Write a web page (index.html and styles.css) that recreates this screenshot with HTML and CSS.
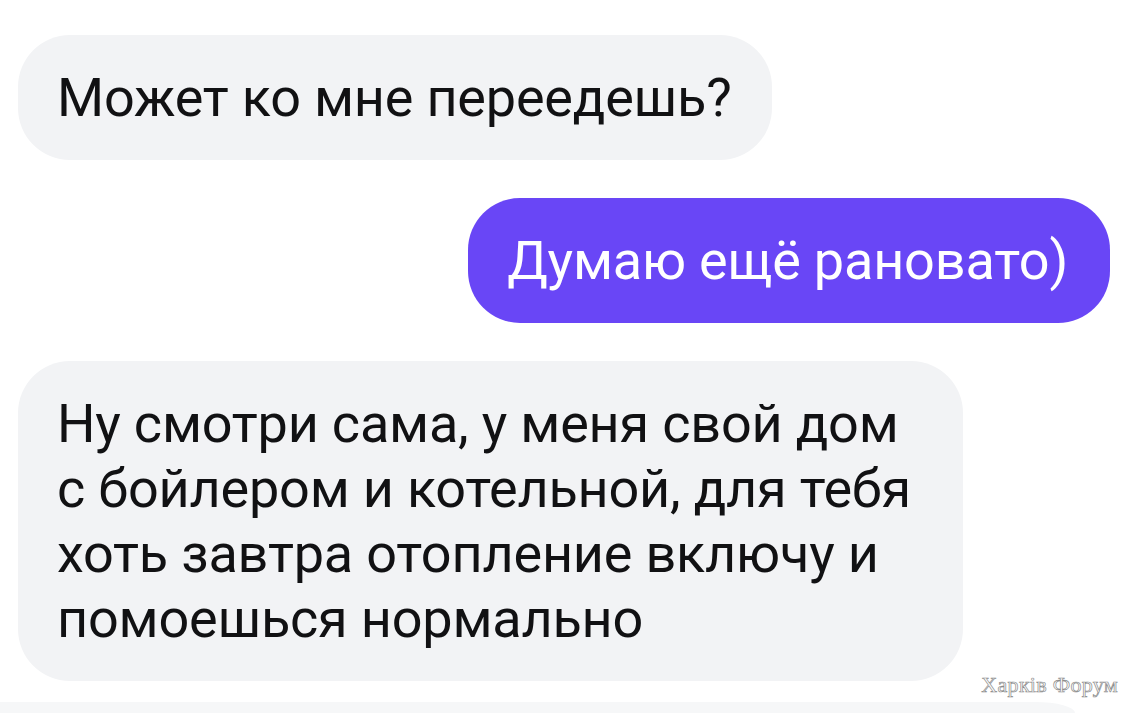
FILE: index.html
```html
<!DOCTYPE html>
<html lang="ru">
<head>
<meta charset="utf-8">
<link rel="stylesheet" href="styles.css">
</head>
<body>
<div class="chat">
  <div class="msg in">Может ко мне переедешь?</div>
  <div class="msg out">Думаю ещё рановато)</div>
  <div class="msg in long">Ну смотри сама, у меня свой дом<br>с бойлером и котельной, для тебя<br>хоть завтра отопление включу и<br>помоешься нормально</div>
  <div class="msg in next"></div>
</div>
<div class="watermark">Харків Форум</div>
</body>
</html>
```
FILE: styles.css
```css
html, body {
  margin: 0;
  padding: 0;
  background: #ffffff;
  width: 1134px;
  height: 714px;
  overflow: hidden;
}
body {
  position: relative;
  font-family: Roboto, "Noto Sans", sans-serif;
}
.chat {
  display: flex;
  flex-direction: column;
  gap: 38px;
  padding: 35px 24px 0 18px;
}
.msg {
  font-size: 54px;
  line-height: 65px;
  letter-spacing: -0.2px;
  padding: 30px 40px 30px 39px;
  border-radius: 52px;
  white-space: nowrap;
}
.in {
  align-self: flex-start;
  background: #f2f3f5;
  color: #111113;
}
.out {
  align-self: flex-end;
  background: #6946f6;
  color: #ffffff;
  padding-right: 42px;
}
.long {
  box-sizing: border-box;
  width: 945px;
}
.msg.next {
  margin-top: -17px;
  margin-left: -18px;
  width: 1075px;
  height: 11px;
  padding: 0;
  border-radius: 0 40px 0 0 / 0 11px 0 0;
  background: #f6f7f8;
}
.watermark {
  position: absolute;
  right: 16px;
  top: 672px;
  font-family: "Liberation Serif", serif;
  font-size: 22px;
  color: #ffffff;
  -webkit-text-stroke: 0.7px #8c8c8c;
  letter-spacing: 0.3px;
}
```
